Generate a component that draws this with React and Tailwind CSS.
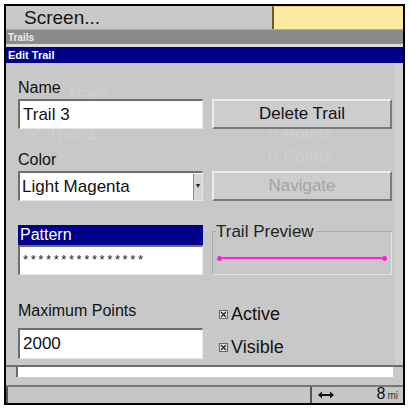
import { useState } from 'react'

const font = { fontFamily: '"Liberation Sans", Arial, sans-serif' }

function Sunken({ children, className = '' }) {
  return (
    <div className={`bg-white border-t-2 border-l-2 border-t-[#6e6e6e] border-l-[#6e6e6e] border-b border-r border-b-[#e8e8e8] border-r-[#e8e8e8] flex items-center ${className}`}>
      {children}
    </div>
  )
}

function Raised({ children, disabled }) {
  return (
    <div className={`h-[30px] flex items-center justify-center bg-[#cdcdcd] border-t-2 border-l-2 border-t-[#ececec] border-l-[#ececec] border-b-2 border-r-2 border-b-[#7a7a7a] border-r-[#7a7a7a] text-[17px] ${disabled ? 'text-[#a4a4a4]' : 'text-[#111]'}`}>
      {children}
    </div>
  )
}

function Check({ label }) {
  return (
    <div className="flex items-center gap-[3px]">
      <svg width="9" height="9" viewBox="0 0 9 9">
        <rect x="0.5" y="0.5" width="8" height="8" fill="#e4e4e4" stroke="#666" />
        <path d="M2 2 L7 7 M7 2 L2 7" stroke="#222" strokeWidth="1.2" />
      </svg>
      <span className="text-[18px] text-[#111]">{label}</span>
    </div>
  )
}

export default function App() {
  const [name] = useState('Trail 3')

  return (
    <div className="w-[409px] h-[409px] bg-white p-[4px]" style={font}>
      <div className="w-full h-full border-2 border-black flex flex-col bg-[#c8c8c8] overflow-hidden">
        {/* Title row */}
        <div className="h-[23px] flex shrink-0">
          <div className="w-[266px] bg-[#c9c9c9] pl-[18px] text-[19px] leading-[23px] text-[#151515]">Screen...</div>
          <div className="flex-1 bg-[#fde9a0] border-l-2 border-l-[#6b5a2a] border-t border-t-[#e9d48a]" />
        </div>
        <div className="h-[15px] shrink-0 bg-[#8b8b8b] pl-[2px] text-[10px] font-bold leading-[15px] text-[#ececec] border-t border-t-[#a8a8a8]">Trails</div>
        <div className="h-[3px] shrink-0 bg-[#dcdcdc]" />
        <div className="h-[16px] shrink-0 bg-[#000088] pl-[2px] text-[11px] font-bold leading-[16px] text-white">Edit Trail</div>

        {/* Dialog body */}
        <div className="relative flex-1 bg-[#c8c8c8] border-r-[8px] border-r-[#cfcfcf] flex flex-col pl-[12px] pr-[2px]">
          {/* faint background list showing through */}
          <div className="absolute inset-0 pointer-events-none text-[#cfcfcf] text-[18px]">
            <div className="absolute left-[60px] top-[18px]">Trails</div>
            <div className="absolute left-[22px] top-[58px]">✓ Trail 1</div>
            <div className="absolute left-[262px] top-[58px]">0 Points</div>
            <div className="absolute left-[262px] top-[80px]">0 Points</div>
          </div>

          <div className="relative grid grid-cols-[185px_180px] gap-x-[9px]">
            <div className="pt-[14px] text-[16px] leading-[22px] text-[#111] col-span-2">Name</div>
            <Sunken className="h-[30px] pl-[3px] text-[17px] text-[#111]">{name}</Sunken>
            <Raised>Delete Trail</Raised>

            <div className="pt-[20px] text-[16px] leading-[22px] text-[#111] col-span-2">Color</div>
            <Sunken className="h-[30px] pl-[2px] text-[17px] text-[#111] justify-between">
              <span>Light Magenta</span>
              <span className="w-[9px] h-[26px] bg-[#d6d6d6] border-l border-[#888] flex items-center justify-center text-[7px] text-[#222]">▼</span>
            </Sunken>
            <Raised disabled>Navigate</Raised>

            <div className="mt-[24px] flex flex-col">
              <div className="h-[20px] bg-[#000088] text-white text-[16px] leading-[20px] pl-[2px]">Pattern</div>
              <Sunken className="h-[30px] pl-[3px] text-[13px] leading-[13px] tracking-[2.6px] text-[#222] items-start pt-[6px]">****************</Sunken>
            </div>
            <div className="mt-[24px] flex flex-col">
              <div className="h-[20px]" />
              <div className="relative border border-[#a8a8a8] border-r-[#e2e2e2] border-b-[#e2e2e2] mt-[-14px] h-[44px] flex items-center px-[4px] pt-[10px]">
                <div className="absolute left-[3px] top-[-9px] bg-[#c8c8c8] pr-[2px] text-[17px] leading-[18px] text-[#222]">Trail Preview</div>
                <div className="flex-1 flex items-center">
                  <span className="w-[5px] h-[5px] rounded-full bg-[#ff1fd6]" />
                  <span className="flex-1 h-[2px] bg-[#ff1fd6]" />
                  <span className="w-[5px] h-[5px] rounded-full bg-[#ff1fd6]" />
                </div>
              </div>
            </div>

            <div className="pt-[25px] text-[16px] leading-[22px] text-[#111]">Maximum Points</div>
            <div className="pt-[26px] pl-[7px]"><Check label="Active" /></div>
            <Sunken className="h-[31px] pl-[3px] text-[17px] text-[#111]">2000</Sunken>
            <div className="pl-[7px] pt-[6px]"><Check label="Visible" /></div>
          </div>
          <div className="flex-1" />
        </div>

        {/* separator strip */}
        <div className="h-[2px] shrink-0 bg-[#6d6d6d]" />
        <div className="h-[10px] shrink-0 bg-[#c8c8c8] flex px-[10px]">
          <div className="flex-1 bg-white border-l-2 border-l-[#6d6d6d]" />
        </div>
        <div className="h-[8px] shrink-0 bg-[#c8c8c8]" />
        <div className="h-[2px] shrink-0 bg-[#777]" />
        {/* status bar */}
        <div className="h-[16px] shrink-0 flex bg-[#c6c6c6]">
          <div className="w-[306px] border-l-2 border-l-[#555] border-r-2 border-r-[#555]" />
          <div className="flex-1 flex items-center justify-between pl-[6px] pr-[5px] text-[#111]">
            <svg width="16" height="8" viewBox="0 0 16 8">
              <path d="M3 4 H13" stroke="#111" strokeWidth="2" />
              <path d="M0 4 L4 0.5 V7.5 Z M16 4 L12 0.5 V7.5 Z" fill="#111" />
            </svg>
            <span className="text-[16px] leading-[16px]">8<span className="text-[10px] ml-[2px] text-[#333]">mi</span></span>
          </div>
        </div>
      </div>
    </div>
  )
}
